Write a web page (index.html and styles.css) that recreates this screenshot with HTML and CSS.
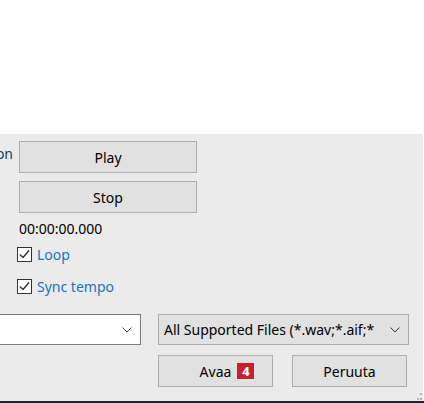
FILE: index.html
```html
<!DOCTYPE html>
<html>
<head>
<meta charset="utf-8">
<link rel="stylesheet" href="styles.css">
</head>
<body>
<div class="screen">
  <div class="top"></div>
  <div class="panel">
    <div class="controls">
      <div class="label">on</div>
      <div class="col">
        <button class="btn wide">Play</button>
        <button class="btn wide stop">Stop</button>
        <div class="time">00:00:00.000</div>
        <label class="check loop"><svg width="15" height="15" viewBox="0 0 15 15"><rect x="0.5" y="0.5" width="14" height="14" fill="#fff" stroke="#333"/><path d="M3 7.5 L6 10.5 L12 3.5" fill="none" stroke="#333" stroke-width="1.4"/></svg><span>Loop</span></label>
        <label class="check sync"><svg width="15" height="15" viewBox="0 0 15 15"><rect x="0.5" y="0.5" width="14" height="14" fill="#fff" stroke="#333"/><path d="M3 7.5 L6 10.5 L12 3.5" fill="none" stroke="#333" stroke-width="1.4"/></svg><span>Sync tempo</span></label>
      </div>
    </div>
    <div class="filerow">
      <div class="combo name"><span></span><svg class="chev" width="10" height="6" viewBox="0 0 10 6"><path d="M0.5 0.5 L5 5 L9.5 0.5" fill="none" stroke="#555" stroke-width="1"/></svg></div>
      <div class="combo type"><span class="typetext">All Supported Files (*.wav;*.aif;*</span><svg class="chev" width="10" height="6" viewBox="0 0 10 6"><path d="M0.5 0.5 L5 5 L9.5 0.5" fill="none" stroke="#333" stroke-width="1"/></svg></div>
    </div>
    <div class="btnrow">
      <button class="btn act"><span class="avaa">Avaa<span class="badge">4</span></span></button>
      <button class="btn act">Peruuta</button>
    </div>
    <div class="grip"><i></i><i></i><i></i></div>
  </div>
  <div class="bottombar"></div>
</div>
</body>
</html>
```

FILE: styles.css
```css
html, body {
  margin: 0;
  padding: 0;
  background: #ffffff;
  width: 424px;
  height: 403px;
  overflow: hidden;
}
.screen {
  display: flex;
  flex-direction: column;
  width: 424px;
  height: 403px;
  font-family: "Noto Sans", "DejaVu Sans", sans-serif;
  font-size: 14px;
  color: #000;
}
.top {
  height: 134px;
  background: #fff;
}
.panel {
  position: relative;
  height: 267px;
  width: 423px;
  background: #ebebeb;
  box-sizing: border-box;
  padding-top: 7px;
}
.controls {
  display: flex;
}
.label {
  width: 13px;
  overflow: hidden;
  margin-right: 6px;
  padding-top: 3px;
  line-height: 19px;
  color: #1d3a5c;
  white-space: nowrap;
  direction: rtl;
}
.col {
  display: flex;
  flex-direction: column;
  align-items: flex-start;
}
.btn {
  font-family: "Noto Sans", "DejaVu Sans", sans-serif;
  font-size: 14px;
  color: #000;
  background: #e1e1e1;
  border: 1px solid #adadad;
  box-sizing: border-box;
  padding: 0;
  margin: 0;
}
.wide {
  width: 178px;
  height: 32px;
}
.stop {
  margin-top: 8px;
}
.time {
  margin-top: 6px;
  line-height: 19px;
  height: 19px;
}
.check {
  display: flex;
  align-items: center;
  gap: 5px;
  margin-left: -2px;
  color: #1b72c4;
  line-height: 19px;
  height: 19px;
}
.check svg {
  display: block;
}
.loop {
  margin-top: 7px;
}
.sync {
  margin-top: 13px;
}
.filerow {
  display: flex;
  margin-top: 18px;
  gap: 17px;
}
.combo {
  height: 31px;
  box-sizing: border-box;
  display: flex;
  align-items: center;
  justify-content: space-between;
}
.combo.name {
  width: 141px;
  background: #fff;
  border: 1px solid #7a7a7a;
  border-left: none;
  padding-right: 8px;
}
.combo.type {
  width: 251px;
  background: #e1e1e1;
  border: 1px solid #adadad;
  padding: 0 8px 0 5px;
}
.typetext {
  white-space: nowrap;
  overflow: hidden;
  width: 228px;
}
.btnrow {
  display: flex;
  gap: 19px;
  margin-top: 10px;
  padding-left: 158px;
}
.act {
  width: 115px;
  height: 32px;
  display: flex;
  align-items: center;
  justify-content: center;
}
.avaa {
  position: relative;
}
.badge {
  position: absolute;
  left: calc(100% + 6px);
  top: 1px;
  width: 17px;
  height: 16px;
  background: #c8202f;
  color: #fff;
  font-weight: bold;
  font-size: 13px;
  line-height: 16px;
  text-align: center;
}
.grip {
  position: absolute;
  right: 1px;
  bottom: 1px;
  width: 7px;
  height: 7px;
}
.grip i {
  position: absolute;
  width: 2px;
  height: 2px;
  background: #b5b5b5;
}
.grip i:nth-child(1) { right: 0; top: 0; }
.grip i:nth-child(2) { right: 3px; bottom: 0; }
.grip i:nth-child(3) { right: 0; bottom: 0; }
.bottombar {
  height: 2px;
  background: #1e2430;
}
```
